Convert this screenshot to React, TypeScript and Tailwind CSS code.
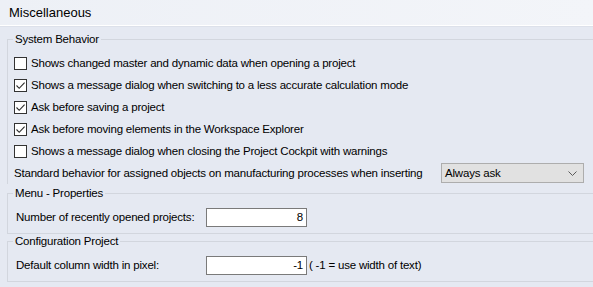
import React from "react";

const font = { fontFamily: '"Liberation Sans", Arial, sans-serif' };

function Check({ checked, label }: { checked: boolean; label: string }) {
  return (
    <div className="flex h-[22px] items-center">
      <div className="flex h-[13px] w-[13px] shrink-0 items-center justify-center border border-[#333333] bg-white">
        {checked && (
          <svg width="11" height="11" viewBox="0 0 11 11">
            <path d="M1.5 5.5 L4.2 8.3 L9.6 2.6" fill="none" stroke="#2b2b2b" strokeWidth="1.1" />
          </svg>
        )}
      </div>
      <span className="ml-[4px] whitespace-nowrap">{label}</span>
    </div>
  );
}

function Legend({ children }: { children: React.ReactNode }) {
  return (
    <div className="-mt-[8px] ml-[5px] h-[15px] w-fit whitespace-nowrap bg-[#e5e9f2] px-[2px] leading-[15px]">
      {children}
    </div>
  );
}

export default function App() {
  return (
    <div
      className="h-[287px] w-[593px] overflow-hidden bg-[#e5e9f2] text-[11.5px] leading-[15px] tracking-[-0.2px] text-black"
      style={font}
    >
      <div className="flex h-[25px] items-center bg-gradient-to-r from-[#edf0f6] to-[#f3f5f9] pl-[9px] text-[13px] tracking-normal">
        Miscellaneous
      </div>
      <div className="h-[1px] bg-white" />
      <div className="h-[1px] bg-[#dde1ea]" />
      <div className="pl-[7px]">
        <div className="mt-[12px] border-l border-t border-[#d2d6de] pl-[6px] pb-[1px]">
          <div className="-ml-[6px]">
            <Legend>System Behavior</Legend>
          </div>
          <div className="mt-[5px]">
            <Check checked={false} label="Shows changed master and dynamic data when opening a project" />
            <Check checked={true} label="Shows a message dialog when switching to a less accurate calculation mode" />
            <Check checked={true} label="Ask before saving a project" />
            <Check checked={true} label="Ask before moving elements in the Workspace Explorer" />
            <Check checked={false} label="Shows a message dialog when closing the Project Cockpit with warnings" />
          </div>
          <div className="mt-[1px] flex h-[20px] items-center">
            <span className="w-[427px] shrink-0 whitespace-nowrap">
              Standard behavior for assigned objects on manufacturing processes when inserting
            </span>
            <div className="flex h-[20px] w-[143px] shrink-0 items-center justify-between border border-[#adadad] bg-[#e1e1e1] pl-[3px] pr-[6px]">
              <span>Always ask</span>
              <svg width="9" height="5" viewBox="0 0 9 5">
                <path d="M0.5 0.5 L4.5 4.5 L8.5 0.5" fill="none" stroke="#5a5a5a" strokeWidth="1" />
              </svg>
            </div>
          </div>
        </div>

        <div className="mt-[9px] border-b border-l border-t border-[#d2d6de] pb-[6px]">
          <Legend>Menu - Properties</Legend>
          <div className="mt-[7px] flex h-[19px] items-center pl-[8px]">
            <span className="w-[190px] shrink-0 whitespace-nowrap">Number of recently opened projects:</span>
            <div className="flex h-[19px] w-[101px] shrink-0 items-center justify-end border border-[#7a7a7a] bg-white pr-[3px]">
              8
            </div>
          </div>
        </div>

        <div className="mt-[7px] border-b border-l border-t border-[#d2d6de] pb-[6px]">
          <Legend>Configuration Project</Legend>
          <div className="mt-[7px] flex h-[19px] items-center pl-[8px]">
            <span className="w-[190px] shrink-0 whitespace-nowrap">Default column width in pixel:</span>
            <div className="flex h-[19px] w-[101px] shrink-0 items-center justify-end border border-[#7a7a7a] bg-white pr-[3px]">
              -1
            </div>
            <span className="ml-[2px] whitespace-nowrap">( -1 = use width of text)</span>
          </div>
        </div>
      </div>
    </div>
  );
}
